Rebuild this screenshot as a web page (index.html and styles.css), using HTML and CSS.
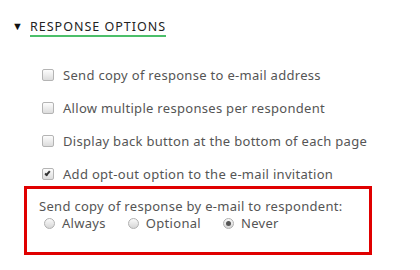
FILE: index.html
```html
<!DOCTYPE html>
<html lang="en">
<head>
    <meta charset="UTF-8">
    <title>Response options</title>
    <link rel="stylesheet" href="styles.css">
</head>
<body>
    <div class="section">
        <div class="section-head">
            <span class="caret">&#9660;</span>
            <span class="section-title">Response options</span>
        </div>
        <ul class="options">
            <li><label><input type="checkbox" class="box"> Send copy of response to e-mail address</label></li>
            <li><label><input type="checkbox" class="box"> Allow multiple responses per respondent</label></li>
            <li><label><input type="checkbox" class="box"> Display back button at the bottom of each page</label></li>
            <li><label><input type="checkbox" class="box" checked> Add opt-out option to the e-mail invitation</label></li>
        </ul>
        <div class="highlight">
            <div class="question">Send copy of response by e-mail to respondent:</div>
            <div class="choices">
                <label><input type="radio" name="copy" class="dot"> Always</label>
                <label><input type="radio" name="copy" class="dot"> Optional</label>
                <label><input type="radio" name="copy" class="dot" checked> Never</label>
            </div>
        </div>
    </div>
</body>
</html>
```

FILE: styles.css
```css
/* reset */
*, *:before, *:after {
    padding: 0;
    margin: 0;
    box-sizing: border-box;
}
body {
    font: normal 13px/20px 'Noto Sans', Arial, sans-serif;
    letter-spacing: 0.3px;
    color: #555;
    background: #fff;
}
.section {
    padding-top: 16px;
}
.section-head {
    display: flex;
    align-items: center;
    height: 20px;
}
.caret {
    font-size: 11px;
    color: #111;
    margin-left: 12px;
    width: 18px;
}
.section-title {
    text-transform: uppercase;
    font-size: 12.5px;
    line-height: 16px;
    color: #222;
    letter-spacing: 1px;
    padding-top: 3px;
    margin-top: 1px;
    border-bottom: 2px solid #4cbf6a;
}
.options {
    list-style: none;
    margin-top: 29px;
    padding-left: 42px;
}
.options li {
    height: 20px;
    margin-bottom: 13px;
}
.options li:last-child {
    margin-bottom: 2px;
}
.options label {
    display: flex;
    align-items: center;
    gap: 9px;
}
.box {
    -webkit-appearance: none;
    appearance: none;
    width: 12px;
    height: 12px;
    border: 1px solid #b4b4b4;
    border-radius: 2px;
    background: linear-gradient(#fdfdfd, #dcdcdc);
    position: relative;
}
.box:checked:after {
    content: '';
    position: absolute;
    left: 3px;
    top: 1px;
    width: 3px;
    height: 6px;
    border-right: 2px solid #333;
    border-bottom: 2px solid #333;
    transform: rotate(40deg);
}
.highlight {
    margin-left: 24px;
    width: 348px;
    height: 69px;
    border: 3px solid #e00000;
    padding: 8px 0 0 12px;
}
.question {
    line-height: 18px;
}
.choices {
    display: flex;
    gap: 22px;
    padding-left: 5px;
    line-height: 16px;
}
.choices label {
    display: flex;
    align-items: center;
    gap: 7px;
}
.dot {
    -webkit-appearance: none;
    appearance: none;
    width: 11px;
    height: 11px;
    border: 1px solid #b0b0b0;
    border-radius: 50%;
    background: linear-gradient(#fafafa, #d6d6d6);
    position: relative;
}
.dot:checked:after {
    content: '';
    position: absolute;
    left: 2px;
    top: 2px;
    width: 5px;
    height: 5px;
    border-radius: 50%;
    background: #555;
}
```
